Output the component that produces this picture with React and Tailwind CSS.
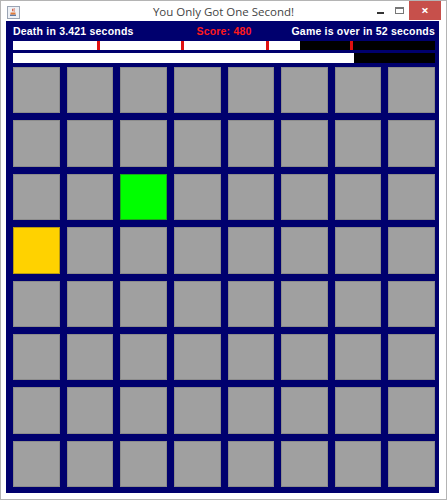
import React from 'react';

const ROWS = 8;
const COLS = 8;

// which tiles are lit
const lit = {
  '2-2': 'bg-[#00ff00] border-[#1aa81a]',
  '3-0': 'bg-[#ffd200] border-[#b89a10]',
};

const JavaIcon = () => (
  <svg width="13" height="13" viewBox="0 0 13 13">
    <rect x="0.5" y="0.5" width="12" height="12" fill="#eef1f6" stroke="#9aa4b4" />
    <path d="M3 8.5 h6 v1.5 h-6z" fill="#5d7ba8" />
    <path d="M3.5 6.5 h5 v2 h-5z" fill="#e07b39" />
    <path d="M6 2.5 q-1.5 1.5 0 3 M7.5 2.5 q-1.5 1.5 0 3" stroke="#d0563a" fill="none" strokeWidth="0.9" />
  </svg>
);

const TitleBar = () => (
  <div className="relative flex h-[20px] items-center">
    <div className="ml-[6px] mt-[2px]">
      <JavaIcon />
    </div>
    <div
      className="absolute left-0 right-0 top-[2px] text-center text-[11.5px] text-[#444]"
      style={{ fontFamily: '"Open Sans", "Noto Sans", sans-serif' }}
    >
      You Only Got One Second!
    </div>
    <div className="ml-auto flex h-full items-start">
      <div className="flex h-[20px] w-[18px] items-center justify-center">
        <div className="mt-[3px] h-[2px] w-[7px] bg-[#333]" />
      </div>
      <div className="flex h-[20px] w-[20px] items-center justify-center">
        <div className="mb-[2px] h-[7px] w-[9px] border border-[#777] border-t-2" />
      </div>
      <div className="-mt-px flex h-[20px] w-[32px] items-center justify-center bg-[#c7504b] text-[13px] font-bold leading-none text-white">
        ×
      </div>
      <div className="w-[5px]" />
    </div>
  </div>
);

const Bar = ({ h, fill, ticks }) => (
  <div className={`relative w-[422px] bg-black ${h}`}>
    <div className="h-full bg-white" style={{ width: `${fill}px` }} />
    {ticks &&
      [84, 168, 253, 337].map((x) => (
        <div
          key={x}
          className="absolute top-0 h-full w-[3px] bg-[#e01010]"
          style={{ left: `${x}px` }}
        />
      ))}
  </div>
);

export default function App() {
  const cells = [];
  for (let r = 0; r < ROWS; r++) {
    for (let c = 0; c < COLS; c++) {
      const k = `${r}-${c}`;
      cells.push(
        <div
          key={k}
          className={`border ${lit[k] || 'bg-[#a0a0a0] border-[#8c8c8c]'}`}
        />
      );
    }
  }

  return (
    <div className="h-[500px] w-[447px] overflow-hidden border border-[#b4b4b4] bg-white">
      <TitleBar />
      <div className="ml-[5px] flex h-[472px] w-[433px] flex-col bg-[#00006e] pl-[7px] pt-[3px]">
        {/* status line */}
        <div
          className="grid h-[16px] w-[422px] grid-cols-[minmax(0,1fr)_auto_minmax(0,1fr)] items-center whitespace-nowrap text-[10.5px] font-bold tracking-[0.2px] text-white"
          style={{ fontFamily: '"Liberation Sans", Arial, sans-serif' }}
        >
          <span>Death in 3.421 seconds</span>
          <span className="text-center text-[#ff1a1a]">Score: 480</span>
          <span className="text-right">Game is over in 52 seconds</span>
        </div>

        <div className="mt-[1px] flex flex-col gap-[3px]">
          <Bar h="h-[9px]" fill={287} ticks />
          <Bar h="h-[10px]" fill={341} />
        </div>

        <div className="mt-[4px] grid h-[420px] w-[422px] grid-cols-8 grid-rows-8 gap-[7px]">
          {cells}
        </div>
      </div>
    </div>
  );
}
